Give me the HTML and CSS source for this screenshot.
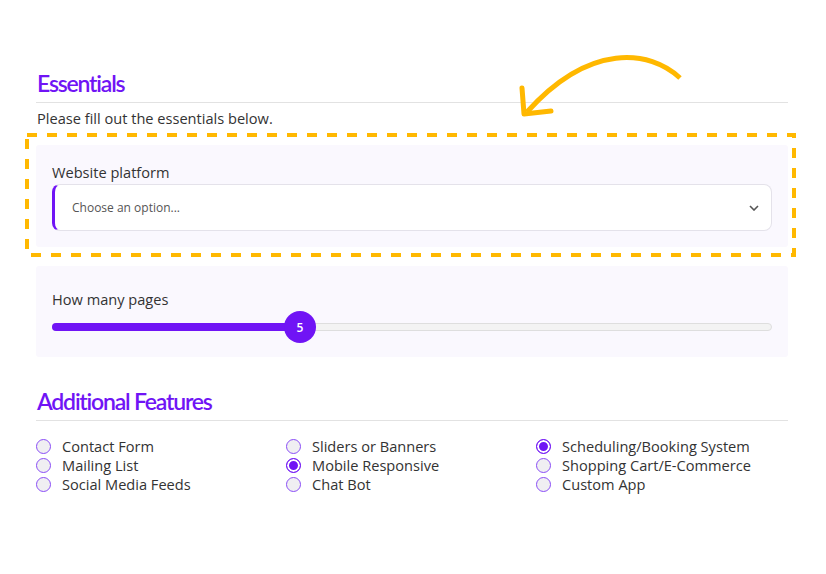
FILE: index.html
```html
<!DOCTYPE html>
<html>
<head>
<meta charset="utf-8">
<link rel="stylesheet" href="styles.css">
</head>
<body>
<div class="page">
  <svg class="arrow" width="200" height="110" viewBox="0 0 200 110">
    <path d="M180 38 C 150 10, 90 2, 27 72" fill="none" stroke="#ffb800" stroke-width="5" stroke-linecap="butt"/>
    <path d="M22 48 L24 74 L51 71" fill="none" stroke="#ffb800" stroke-width="5" stroke-linecap="round" stroke-linejoin="round"/>
  </svg>
  <h2 class="section-title">Essentials</h2>
  <p class="intro">Please fill out the essentials below.</p>
  <div class="highlight">
    <svg class="dash" width="771" height="124" viewBox="0 0 771 124">
      <rect x="2" y="2" width="767" height="120" fill="none" stroke="#ffb800" stroke-width="4" stroke-dasharray="10 10"/>
    </svg>
    <div class="card">
      <div class="label">Website platform</div>
      <div class="select">
        <span>Choose an option...</span>
        <svg width="10" height="6" viewBox="0 0 10 6"><path d="M1 1 L5 5 L9 1" fill="none" stroke="#555" stroke-width="1.6"/></svg>
      </div>
    </div>
  </div>
  <div class="card card-slider">
    <div class="label">How many pages</div>
    <div class="slider">
      <div class="track"></div>
      <div class="fill" style="width: 248px"></div>
      <div class="thumb" style="left: 232px">5</div>
    </div>
  </div>
  <h2 class="section-title second">Additional Features</h2>
  <div class="features">
    <div class="col">
      <label class="opt"><span class="radio"></span>Contact Form</label>
      <label class="opt"><span class="radio"></span>Mailing List</label>
      <label class="opt"><span class="radio"></span>Social Media Feeds</label>
    </div>
    <div class="col">
      <label class="opt"><span class="radio"></span>Sliders or Banners</label>
      <label class="opt"><span class="radio on"></span>Mobile Responsive</label>
      <label class="opt"><span class="radio"></span>Chat Bot</label>
    </div>
    <div class="col">
      <label class="opt"><span class="radio on"></span>Scheduling/Booking System</label>
      <label class="opt"><span class="radio"></span>Shopping Cart/E-Commerce</label>
      <label class="opt"><span class="radio"></span>Custom App</label>
    </div>
  </div>
</div>
</body>
</html>
```
FILE: styles.css
```css
* { box-sizing: border-box; }
html, body { margin: 0; padding: 0; background: #fff; }
body {
  font-family: "Open Sans", "Noto Sans", sans-serif;
  color: #333;
  width: 826px;
  height: 574px;
  overflow: hidden;
}
.page {
  position: relative;
  width: 752px;
  margin-left: 36px;
  padding-top: 68px;
}
.arrow {
  position: absolute;
  left: 464px;
  top: 40px;
}
.section-title {
  margin: 0;
  font-family: "Lato", sans-serif;
  font-weight: 600;
  font-size: 23px;
  line-height: 30px;
  letter-spacing: -1.2px;
  color: #7014f5;
  padding-bottom: 4px;
  padding-left: 1px;
  border-bottom: 1px solid #e2e2e2;
}
.intro {
  margin: 5px 0 0 1px;
  font-size: 14.6px;
  line-height: 20px;
}
.highlight {
  position: relative;
  margin-top: 17px;
}
.dash {
  position: absolute;
  left: -11px;
  top: -12px;
}
.card {
  background: #faf8fe;
  border-radius: 3px;
  padding: 17px 16px 16px 16px;
}
.label {
  font-size: 14.6px;
  line-height: 20px;
  margin-bottom: 2px;
}
.select {
  height: 47px;
  background: #fff;
  border: 1px solid #e4e2ea;
  border-left: 3px solid #7014f5;
  border-radius: 8px;
  display: flex;
  align-items: center;
  justify-content: space-between;
  padding: 0 12px 0 17px;
  font-size: 12px;
  color: #555;
}
.card-slider {
  margin-top: 19px;
  padding-top: 23px;
  padding-bottom: 14px;
}
.slider {
  position: relative;
  height: 32px;
  margin-top: 1px;
}
.track {
  position: absolute;
  left: 0; right: 0;
  top: 12px;
  height: 8px;
  background: #f3f3f3;
  border: 1px solid #dedede;
  border-radius: 4px;
}
.fill {
  position: absolute;
  left: 0;
  top: 12px;
  height: 8px;
  background: #7014f5;
  border-radius: 4px;
}
.thumb {
  position: absolute;
  top: 0;
  width: 32px;
  height: 32px;
  border-radius: 50%;
  background: #7014f5;
  color: #fff;
  font-size: 12px;
  font-weight: 600;
  display: flex;
  align-items: center;
  justify-content: center;
}
.second {
  margin-top: 29px;
}
.features {
  display: grid;
  grid-template-columns: 250px 250px 252px;
  margin-top: 16px;
}
.col {
  display: flex;
  flex-direction: column;
}
.opt {
  display: flex;
  align-items: center;
  font-size: 14.6px;
  line-height: 19px;
  height: 19px;
}
.radio {
  width: 15px;
  height: 15px;
  border-radius: 50%;
  border: 1.5px solid #8a4df7;
  background: #f0eff2;
  margin-right: 11px;
  flex: none;
}
.radio.on {
  background: #7014f5;
  box-shadow: inset 0 0 0 2px #fff;
  border-color: #7014f5;
}
```
